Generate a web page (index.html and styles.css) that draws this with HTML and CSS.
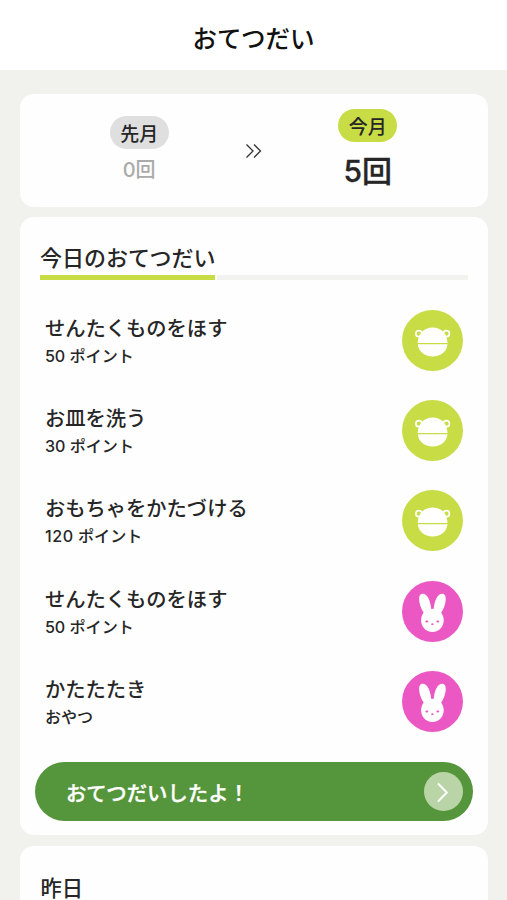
FILE: index.html
```
<!DOCTYPE html>
<html lang="ja">
<head>
<meta charset="utf-8">
<title>おてつだい</title>
<link rel="stylesheet" href="styles.css">
</head>
<body>
<svg class="defs" width="0" height="0" aria-hidden="true">
  <symbol id="frog" viewBox="0 0 61 61">
    <circle cx="16.9" cy="23.7" r="3" fill="none" stroke="#fff" stroke-width="1.7"/>
    <circle cx="44.4" cy="23.7" r="3" fill="none" stroke="#fff" stroke-width="1.7"/>
    <path d="M15.7 33C15.9 23.8 22 17.4 30.7 17.4S45.3 23.8 45.5 33Z" fill="#fff"/>
    <path d="M15.8 34.2H45.5C44.8 41.5 39 46.4 30.7 46.4S16.4 41.5 15.8 34.2Z" fill="#fff"/>
  </symbol>
  <symbol id="rabbit" viewBox="0 0 61 61">
    <g fill="#fff">
      <path d="M20.6 12.7C25.5 12.7 28.7 20 29.2 29L22.2 32.5C18.5 27 17 21.5 17.1 17.5 17.2 14.5 18.4 12.7 20.6 12.7Z"/>
      <path d="M40.2 12.7C35.3 12.7 32.1 20 31.6 29L38.6 32.5C42.3 27 43.8 21.5 43.7 17.5 43.6 14.5 42.4 12.7 40.2 12.7Z"/>
      <path d="M30.4 27.8C37.2 27.8 41.7 32.8 41.7 39.3S37.1 51 30.4 51 19.1 45.8 19.1 39.3 23.6 27.8 30.4 27.8Z"/>
    </g>
    <g fill="#eb58c4">
      <ellipse cx="24.8" cy="40.6" rx="1.5" ry="1"/>
      <ellipse cx="35.8" cy="40.6" rx="1.5" ry="1"/>
      <ellipse cx="30.4" cy="43.2" rx="1.2" ry=".9"/>
    </g>
  </symbol>
</svg>
<header class="header"><h1>おてつだい</h1></header>
<main class="main">
  <section class="card summary">
    <div class="month last"><span class="pill">先月</span><span class="count">0回</span></div>
    <svg class="arrows" viewBox="0 0 18 16"><path d="M1.5 1.5 8 8 1.5 14.5M9 1.5 15.5 8 9 14.5"/></svg>
    <div class="month current"><span class="pill">今月</span><span class="count">5回</span></div>
  </section>
  <section class="card today">
    <h2><span>今日のおてつだい</span></h2>
    <ul class="list">
      <li><div><p class="name">せんたくものをほす</p><p class="reward">50 ポイント</p></div><svg class="avatar frog"><use href="#frog"/></svg></li>
      <li><div><p class="name">お皿を洗う</p><p class="reward">30 ポイント</p></div><svg class="avatar frog"><use href="#frog"/></svg></li>
      <li><div><p class="name">おもちゃをかたづける</p><p class="reward"><span class="wide">120</span> ポイント</p></div><svg class="avatar frog"><use href="#frog"/></svg></li>
      <li><div><p class="name">せんたくものをほす</p><p class="reward">50 ポイント</p></div><svg class="avatar rabbit"><use href="#rabbit"/></svg></li>
      <li><div><p class="name">かたたたき</p><p class="reward">おやつ</p></div><svg class="avatar rabbit"><use href="#rabbit"/></svg></li>
    </ul>
    <button class="submit"><span>おてつだいしたよ！</span>
      <svg viewBox="0 0 39 39"><circle cx="19.5" cy="19.5" r="19.5"/><path d="M14.5 12 22.8 20.5 14.5 29"/></svg>
    </button>
  </section>
  <section class="card yesterday"><h2><span>昨日</span></h2></section>
</main>
</body>
</html>
```
FILE: styles.css
```
* { box-sizing: border-box; margin: 0; padding: 0; }
html, body { height: 900px; overflow: hidden; }
body {
  background: #f1f2ee;
  color: #262626;
  font-family: Inter, "Noto Sans CJK JP", sans-serif;
  font-weight: 500;
}
.defs { position: absolute; }
.header {
  height: 70px;
  padding-top: 8px;
  background: #fff;
  display: flex;
  align-items: center;
  justify-content: center;
}
.header h1 { font-size: 24.5px; line-height: 36px; font-weight: 500; color: #111; }
.main {
  height: 830px;
  overflow: hidden;
  padding: 24px 19.5px 0 20.4px;
  display: flex;
  flex-direction: column;
  gap: 10.5px;
}
.card { flex-shrink: 0; background: #fefefe; border-radius: 14px; }
.summary {
  height: 112.5px;
  display: grid;
  grid-template-columns: 1fr 18px 1fr;
  align-items: center;
}
.month { display: flex; flex-direction: column; align-items: center; }
.last { padding-left: 13px; }
.current { padding-right: 15px; }
.pill {
  width: 59px;
  height: 33px;
  padding-top: 2px;
  border-radius: 17px;
  font-size: 19px;
  line-height: 33px;
  text-align: center;
}
.last .pill { background: #dfdfdf; }
.current .pill { background: #c8dd45; }
.last .count { margin-top: 7px; font-size: 20px; line-height: 28px; color: #aaa; }
.current .count { margin-top: 8px; font-size: 30px; line-height: 42px; -webkit-text-stroke: .3px; }
.arrows { width: 18px; height: 16px; margin-top: 1px; fill: none; stroke: #333; stroke-width: 1.3; }
.today { height: 618px; padding: 24px 14.5px 0; }
.card h2 {
  margin: 0 5px;
  height: 39px;
  border-bottom: 5px solid #f2f2f0;
  font-size: 22px;
  font-weight: 500;
  line-height: 34px;
}
.card h2 span {
  display: inline-block;
  height: 39px;
  border-bottom: 5px solid #c8dd45;
  box-shadow: 2px 0 #fefefe;
}
.list { list-style: none; padding: 29.5px 10px 0; }
.list li {
  height: 90.4px;
  display: flex;
  align-items: flex-start;
  justify-content: space-between;
}
.name { margin-top: 4px; font-size: 20.3px; line-height: 30px; }
.reward { font-size: 16.1px; line-height: 24px; }
.wide { letter-spacing: .6px; }
.avatar { width: 61px; height: 61px; border-radius: 50%; }
.frog { background: #c8dd45; }
.rabbit { background: #eb58c4; }
.submit {
  width: 438px;
  height: 59px;
  margin-top: 1px;
  padding: 0 10px 0 31px;
  border: 0;
  border-radius: 30px;
  background: #55953b;
  color: #fff;
  display: flex;
  align-items: center;
  justify-content: space-between;
  font: inherit;
  font-size: 20.4px;
  -webkit-text-stroke: .35px;
}
.submit svg { width: 39px; height: 39px; fill: #b9d5a7; }
.submit path { fill: none; stroke: #fff; stroke-width: 2; stroke-linecap: round; stroke-linejoin: round; }
.yesterday { height: 120px; padding: 25px 15px; }
.yesterday h2, .yesterday h2 span { border-bottom: 0; box-shadow: none; font-size: 21.3px; }
```
